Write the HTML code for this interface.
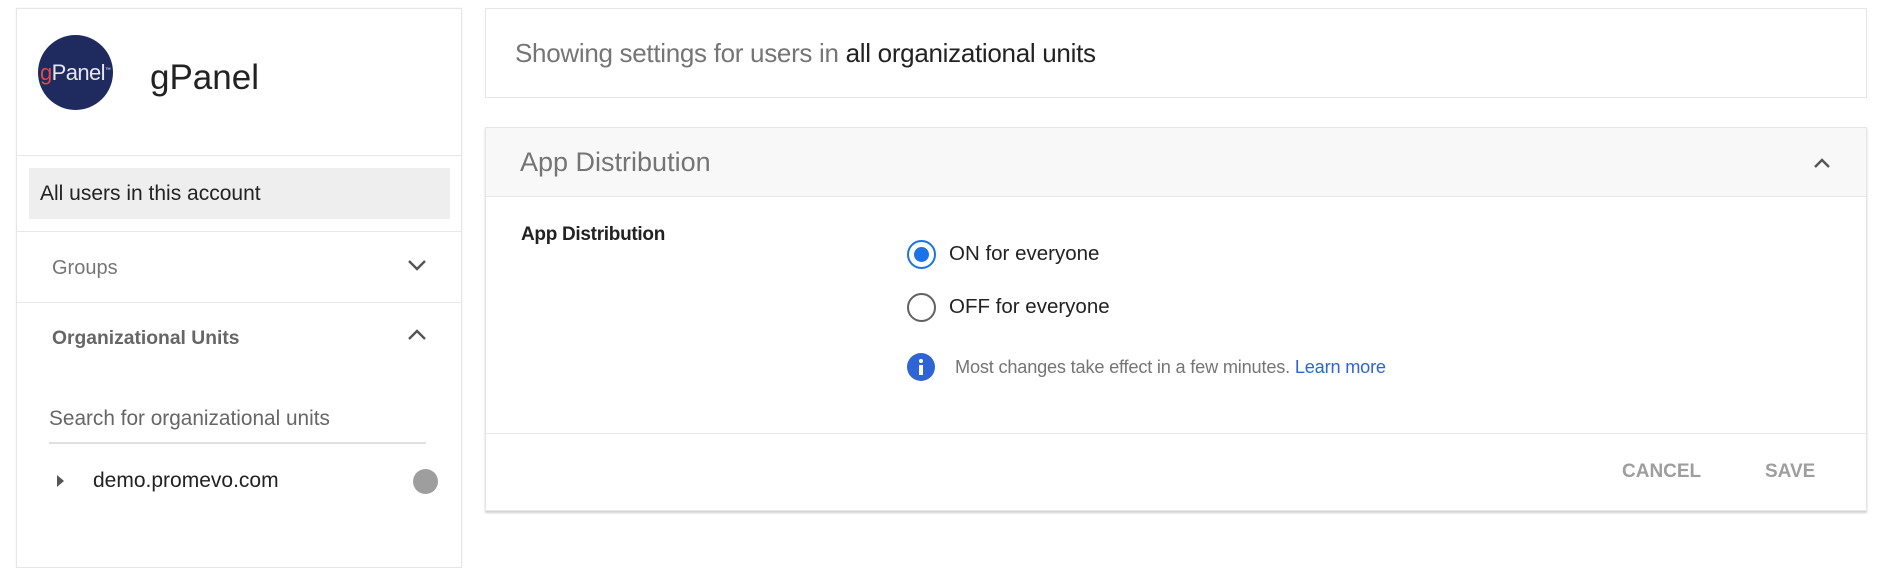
<!DOCTYPE html>
<html><head><style>
*{box-sizing:border-box;margin:0;padding:0}
body{width:1900px;height:548px;background:#fff;font-family:"Liberation Sans",Arial,sans-serif;position:relative;overflow:hidden}
.a{position:absolute;white-space:nowrap;line-height:1}
.card{position:absolute;background:#fff;border:1px solid #e6e6e6}
.line{position:absolute;height:1px;background:#e8e8e8}
</style></head><body>
<div class="card" style="left:16px;top:8px;width:446px;height:560px;box-shadow:0 0 2px rgba(0,0,0,.08)"></div>
<div class="a" style="left:38px;top:35px;width:75px;height:75px;border-radius:50%;background:#1f2a5e"></div>
<div class="a" style="left:40px;top:62px;font-size:22px;color:#e6e6ee;letter-spacing:-0.6px"><span style="color:#e04848">g</span>Panel<sup style="font-size:6px">™</sup></div>
<div class="a" style="left:150px;top:60px;font-size:35px;color:#222">gPanel</div>
<div class="line" style="left:17px;top:155px;width:444px"></div>
<div class="a" style="left:29px;top:168px;width:421px;height:51px;background:#eeeeee"></div>
<div class="a" style="left:40px;top:183px;font-size:21px;color:#222">All users in this account</div>
<div class="line" style="left:17px;top:231px;width:444px"></div>
<div class="a" style="left:52px;top:258px;font-size:20px;color:#757575">Groups</div>
<svg class="a" style="left:406px;top:258px" width="22" height="14"><path d="M3 3 L11 11 L19 3" stroke="#555" stroke-width="2.4" fill="none"/></svg>
<div class="a" style="left:52px;top:329px;font-size:19.3px;color:#666;font-weight:bold">Organizational Units</div>
<svg class="a" style="left:406px;top:328px" width="22" height="14"><path d="M3 11 L11 3 L19 11" stroke="#555" stroke-width="2.4" fill="none"/></svg>
<div class="line" style="left:17px;top:302px;width:444px"></div>
<div class="a" style="left:49px;top:409px;font-size:20.8px;color:#666">Search for organizational units</div>
<div class="line" style="left:49px;top:442px;width:377px;height:2px;background:#e0e0e0"></div>
<svg class="a" style="left:56px;top:473px" width="10" height="16"><path d="M1 2 L8 8 L1 14Z" fill="#555"/></svg>
<div class="a" style="left:93px;top:470px;font-size:21px;color:#222">demo.promevo.com</div>
<div class="a" style="left:413px;top:469px;width:25px;height:25px;border-radius:50%;background:#9e9e9e"></div>

<div class="card" style="left:485px;top:8px;width:1382px;height:90px"></div>
<div class="a" style="left:515px;top:40px;font-size:26px;color:#757575;letter-spacing:-0.3px">Showing settings for users in <span style="color:#222">all organizational units</span></div>

<div class="card" style="left:485px;top:127px;width:1382px;height:384px;box-shadow:0 2px 2px rgba(0,0,0,.18)"></div>
<div class="a" style="left:486px;top:128px;width:1380px;height:69px;background:#f8f8f8;border-bottom:1px solid #e6e6e6"></div>
<div class="a" style="left:520px;top:149px;font-size:27px;color:#757575">App Distribution</div>
<svg class="a" style="left:1811px;top:155px" width="22" height="16"><path d="M4 12 L11 5 L18 12" stroke="#555" stroke-width="2.4" fill="none"/></svg>
<div class="a" style="left:521px;top:225px;font-size:19px;color:#222;font-weight:bold;letter-spacing:-0.3px">App Distribution</div>
<div class="a" style="left:907px;top:240px;width:29px;height:29px;border-radius:50%;border:2.5px solid #1a73e8"></div>
<div class="a" style="left:914px;top:247px;width:15px;height:15px;border-radius:50%;background:#1a73e8"></div>
<div class="a" style="left:949px;top:244px;font-size:20.5px;color:#222">ON for everyone</div>
<div class="a" style="left:907px;top:293px;width:29px;height:29px;border-radius:50%;border:2.5px solid #616161"></div>
<div class="a" style="left:949px;top:297px;font-size:20.5px;color:#222">OFF for everyone</div>
<div class="a" style="left:907px;top:353px;width:28px;height:28px;border-radius:50%;background:#2f64d6"></div>
<div class="a" style="left:919px;top:359px;width:4px;height:4px;background:#fff;border-radius:50%"></div>
<div class="a" style="left:919px;top:365px;width:4px;height:10px;background:#fff"></div>
<div class="a" style="left:955px;top:358px;font-size:18.2px;color:#757575;letter-spacing:-0.2px">Most changes take effect in a few minutes. <span style="color:#2f64d6">Learn more</span></div>
<div class="line" style="left:486px;top:433px;width:1380px"></div>
<div class="a" style="left:1622px;top:462px;font-size:19px;color:#9e9e9e;font-weight:bold">CANCEL</div>
<div class="a" style="left:1765px;top:462px;font-size:19px;color:#9e9e9e;font-weight:bold">SAVE</div>
</body></html>
